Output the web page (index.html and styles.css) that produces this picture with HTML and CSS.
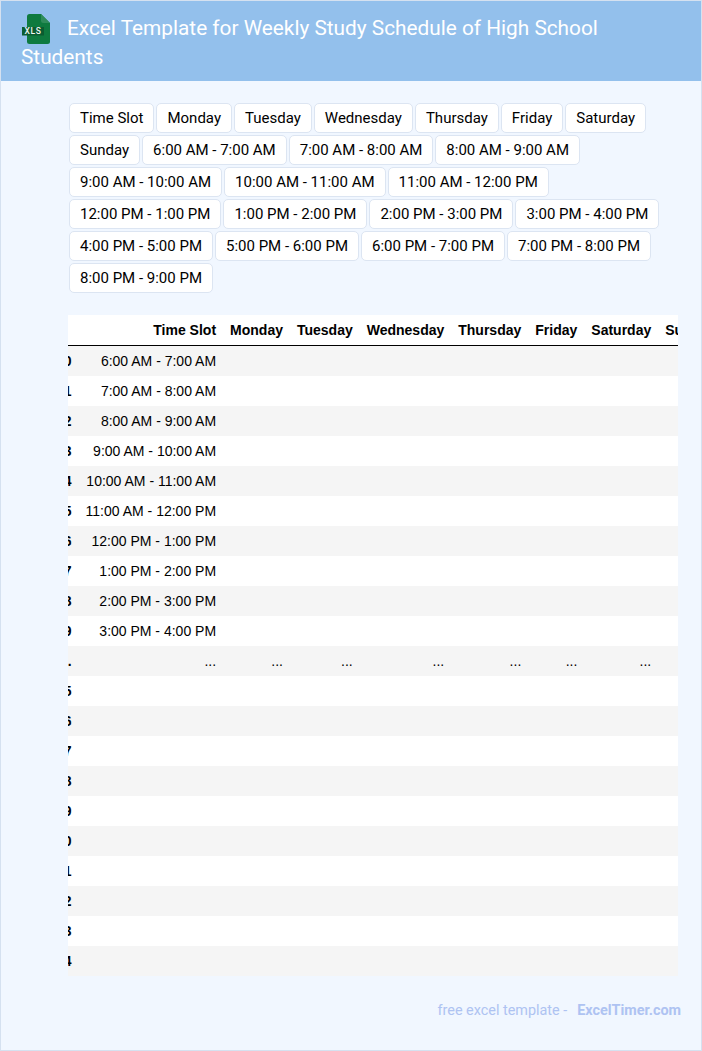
FILE: index.html
```html
<!DOCTYPE html>
<html lang="en">
<head>
<meta charset="utf-8">
<title>Excel Template for Weekly Study Schedule of High School Students</title>
<link rel="stylesheet" href="styles.css">
</head>
<body>
<div class="page">
  <header class="banner">
    <h1 class="title"><svg class="xls-icon" width="30" height="30" viewBox="0 0 30 30" aria-hidden="true">
      <path d="M8.500 0H20L29 9V27.500Q29 30 26.500 30H8.500Q6 30 6 27.500V2.500Q6 0 8.500 0Z" fill="#0e7a3f"/>
      <path d="M20 0L29 9H22.500Q20 9 20 6.500Z" fill="#2f8c5a"/>
      <rect x="1" y="13" width="22" height="8.500" fill="#0a5c31"/>
      <text x="12" y="20.200" class="xls-text" text-anchor="middle">XLS</text>
    </svg><span class="title-text">Excel Template for Weekly Study Schedule of High School Students</span></h1>
  </header>
  <main class="content">
    <div class="tags">
      <span class="tag">Time Slot</span><span class="tag">Monday</span><span class="tag">Tuesday</span><span class="tag">Wednesday</span><span class="tag">Thursday</span><span class="tag">Friday</span><span class="tag">Saturday</span><span class="tag">Sunday</span><span class="tag">6:00 AM - 7:00 AM</span><span class="tag">7:00 AM - 8:00 AM</span><span class="tag">8:00 AM - 9:00 AM</span><span class="tag">9:00 AM - 10:00 AM</span><span class="tag">10:00 AM - 11:00 AM</span><span class="tag">11:00 AM - 12:00 PM</span><span class="tag">12:00 PM - 1:00 PM</span><span class="tag">1:00 PM - 2:00 PM</span><span class="tag">2:00 PM - 3:00 PM</span><span class="tag">3:00 PM - 4:00 PM</span><span class="tag">4:00 PM - 5:00 PM</span><span class="tag">5:00 PM - 6:00 PM</span><span class="tag">6:00 PM - 7:00 PM</span><span class="tag">7:00 PM - 8:00 PM</span><span class="tag">8:00 PM - 9:00 PM</span>
    </div>
    <div class="table-clip">
      <table class="schedule">
        <thead>
          <tr><th></th><th>Time Slot</th><th>Monday</th><th>Tuesday</th><th>Wednesday</th><th>Thursday</th><th>Friday</th><th>Saturday</th><th>Sunday</th></tr>
        </thead>
        <tbody>
          <tr><th>0</th><td>6:00 AM - 7:00 AM</td><td></td><td></td><td></td><td></td><td></td><td></td><td></td></tr>
          <tr><th>1</th><td>7:00 AM - 8:00 AM</td><td></td><td></td><td></td><td></td><td></td><td></td><td></td></tr>
          <tr><th>2</th><td>8:00 AM - 9:00 AM</td><td></td><td></td><td></td><td></td><td></td><td></td><td></td></tr>
          <tr><th>3</th><td>9:00 AM - 10:00 AM</td><td></td><td></td><td></td><td></td><td></td><td></td><td></td></tr>
          <tr><th>4</th><td>10:00 AM - 11:00 AM</td><td></td><td></td><td></td><td></td><td></td><td></td><td></td></tr>
          <tr><th>5</th><td>11:00 AM - 12:00 PM</td><td></td><td></td><td></td><td></td><td></td><td></td><td></td></tr>
          <tr><th>6</th><td>12:00 PM - 1:00 PM</td><td></td><td></td><td></td><td></td><td></td><td></td><td></td></tr>
          <tr><th>7</th><td>1:00 PM - 2:00 PM</td><td></td><td></td><td></td><td></td><td></td><td></td><td></td></tr>
          <tr><th>8</th><td>2:00 PM - 3:00 PM</td><td></td><td></td><td></td><td></td><td></td><td></td><td></td></tr>
          <tr><th>9</th><td>3:00 PM - 4:00 PM</td><td></td><td></td><td></td><td></td><td></td><td></td><td></td></tr>
          <tr><th>...</th><td>...</td><td>...</td><td>...</td><td>...</td><td>...</td><td>...</td><td>...</td><td>...</td></tr>
          <tr><th>15</th><td></td><td></td><td></td><td></td><td></td><td></td><td></td><td></td></tr>
          <tr><th>16</th><td></td><td></td><td></td><td></td><td></td><td></td><td></td><td></td></tr>
          <tr><th>17</th><td></td><td></td><td></td><td></td><td></td><td></td><td></td><td></td></tr>
          <tr><th>18</th><td></td><td></td><td></td><td></td><td></td><td></td><td></td><td></td></tr>
          <tr><th>19</th><td></td><td></td><td></td><td></td><td></td><td></td><td></td><td></td></tr>
          <tr><th>20</th><td></td><td></td><td></td><td></td><td></td><td></td><td></td><td></td></tr>
          <tr><th>21</th><td></td><td></td><td></td><td></td><td></td><td></td><td></td><td></td></tr>
          <tr><th>22</th><td></td><td></td><td></td><td></td><td></td><td></td><td></td><td></td></tr>
          <tr><th>23</th><td></td><td></td><td></td><td></td><td></td><td></td><td></td><td></td></tr>
          <tr><th>24</th><td></td><td></td><td></td><td></td><td></td><td></td><td></td><td></td></tr>
        </tbody>
      </table>
    </div>
  </main>
  <footer class="credit"><span>free excel template -</span><span class="credit-brand">ExcelTimer.com</span></footer>
</div>
</body>
</html>
```
FILE: styles.css
```css
html, body {
  margin: 0;
  padding: 0;
}

body {
  font-family: Roboto, "Liberation Sans", sans-serif;
  color: #000;
  background: #f1f7ff;
}

.page {
  box-sizing: border-box;
  width: 702px;
  height: 1051px;
  overflow: hidden;
  display: flex;
  flex-direction: column;
  background: #f1f7ff;
  border: 1px solid #d5e1f0;
}

.banner {
  flex: none;
  height: 80px;
  box-sizing: border-box;
  padding: 13px 20px 0;
  background: #93c0ec;
}

.title {
  margin: 0;
  font-size: 20.800px;
  line-height: 29px;
  font-weight: 400;
  color: #fff;
}

.xls-icon {
  display: inline-block;
  vertical-align: top;
  margin-right: 16px;
  margin-bottom: -2px;
}

.xls-text {
  font-family: Roboto, sans-serif;
  font-size: 8.500px;
  font-weight: 500;
  fill: #f0f6f2;
  letter-spacing: 0.6px;
}

.content {
  flex: none;
  padding: 22px 23px 0 67px;
}

.tags {
  display: flex;
  flex-wrap: wrap;
  gap: 2px;
  margin-left: 1px;
}

.tag {
  box-sizing: border-box;
  height: 30px;
  padding: 0 10px;
  display: flex;
  align-items: center;
  font-size: 15px;
  white-space: nowrap;
  background: #fff;
  border: 1px solid #dce5f2;
  border-radius: 5px;
}

.table-clip {
  margin-top: 22px;
  overflow: hidden;
  background: #fff;
}

.schedule {
  margin-left: -19px;
  border-collapse: collapse;
  font-family: "Liberation Sans", Arial, sans-serif;
  font-size: 14px;
  white-space: nowrap;
}

.schedule th,
.schedule td {
  padding: 7px;
  text-align: right;
  line-height: 16px;
  height: 16px;
}

.schedule thead th {
  border-bottom: 1px solid #000;
}

.schedule tbody tr:nth-child(odd) {
  background: #f5f5f5;
}

.credit {
  flex: none;
  margin-top: 25px;
  padding-right: 20px;
  display: flex;
  justify-content: flex-end;
  gap: 10px;
  font-size: 14.400px;
  line-height: 20px;
  color: #aec3f2;
}

.credit-brand {
  font-weight: 700;
}
```
